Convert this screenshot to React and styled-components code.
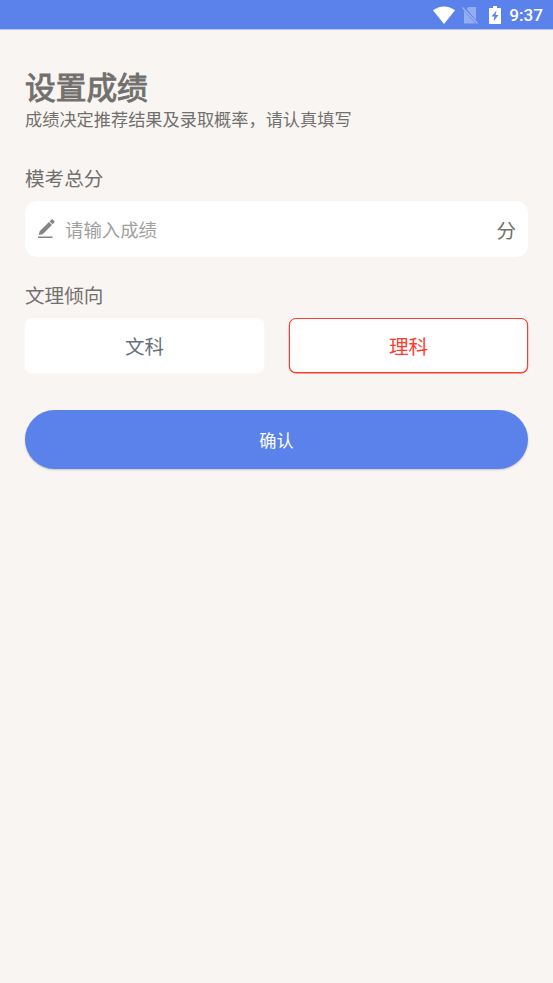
import { useState } from 'react';
import styled, { createGlobalStyle } from 'styled-components';

const GlobalStyle = createGlobalStyle`
  * {
    box-sizing: border-box;
  }

  body {
    margin: 0;
    min-height: 100vh;
    background: #f9f5f2;
    color: #72706e;
    font-family: 'Noto Sans CJK SC', sans-serif;
  }
`;

const StatusBar = styled.header`
  display: flex;
  align-items: center;
  justify-content: flex-end;
  height: 30px;
  padding-right: 10px;
  border-bottom: 1px solid #b3c3ee;
  background: #5b81ea;
  color: #fff;
`;

const StatusIcon = styled.svg`
  display: block;
  margin-right: ${({ $gap }) => $gap}px;
`;

const Clock = styled.span`
  padding-top: 1px;
  font: 500 17.2px/28px Roboto, sans-serif;
`;

const Page = styled.main`
  padding: 33px 25px 0;
`;

const Title = styled.h1`
  margin: 0;
  font-size: 30.7px;
  font-weight: 400;
  line-height: 45px;
  -webkit-text-stroke: 1px currentColor;
`;

const Subtitle = styled.p`
  margin: 0;
  font-size: 17.2px;
  line-height: 21px;
`;

const Label = styled.h2`
  margin: ${({ $top }) => $top}px 0 0;
  font-size: 19.6px;
  font-weight: 400;
  line-height: 28px;
`;

const Field = styled.label`
  display: flex;
  align-items: center;
  height: 56px;
  margin-top: 9px;
  padding: 0 12px;
  border-radius: 12px;
  background: #fff;
  font-size: 19.6px;
`;

const ScoreInput = styled.input`
  flex: 1;
  min-width: 0;
  margin-left: 8px;
  padding: 0;
  border: none;
  outline: none;
  background: transparent;
  color: #72706e;
  font-family: inherit;
  font-size: 18.4px;

  &::placeholder {
    color: #9f9f9f;
    opacity: 1;
  }
`;

const Options = styled.div`
  display: grid;
  grid-template-columns: 1fr 1fr;
  gap: 25px;
  margin-top: 9px;
`;

const Option = styled.button`
  height: 55px;
  padding: 0;
  border: 1px solid ${({ $active }) => ($active ? '#ff3b2d' : '#fff')};
  border-radius: 7px;
  background: #fff;
  box-shadow: 0 0.4px 0 0.2px ${({ $active }) => ($active ? '#ff3b2d' : '#fff')};
  color: ${({ $active }) => ($active ? '#ff3b2d' : '#66707a')};
  font-family: inherit;
  font-size: 19.6px;
  cursor: pointer;
`;

const SubmitButton = styled.button`
  display: block;
  width: 100%;
  height: 59px;
  margin-top: 37px;
  padding: 0;
  border: none;
  border-radius: 30px;
  background: #5b81ea;
  box-shadow: 0 1px 2px rgba(0, 0, 0, 0.2);
  color: #fff;
  font-family: inherit;
  font-size: 17.2px;
  cursor: pointer;
`;

function App() {
  const [score, setScore] = useState('');
  const [subject, setSubject] = useState('理科');

  return (
    <>
      <GlobalStyle />
      <StatusBar>
        <StatusIcon $gap={7} width="22" height="18" viewBox="0 0 22 18">
          <path d="M0 4.2C6.5-.9 15.5-.9 22 4.2L11 18Z" fill="#fff" />
        </StatusIcon>
        <StatusIcon $gap={11} width="16" height="18" viewBox="0 0 16 18">
          <path d="M4.5 3 6.5 1H14v13ZM2 4.5 13.5 17.500H2Z" fill="#fff" opacity=".35" />
          <path d="m.5 1.5 15 16" stroke="#fff" strokeWidth="1.4" opacity=".4" />
        </StatusIcon>
        <StatusIcon $gap={8} width="12" height="18" viewBox="0 0 12 18">
          <path d="M4 0h4v2h3.5l.5.5v15l-.5.5H.5l-.5-.5v-15L.5 2H4Z" fill="#fff" />
          <path d="M7.500 4.5 2.500 10.500H5.500L4.500 15.500 9.500 9H6.500Z" fill="#5b81ea" />
        </StatusIcon>
        <Clock>9:37</Clock>
      </StatusBar>
      <Page>
        <Title>设置成绩</Title>
        <Subtitle>成绩决定推荐结果及录取概率，请认真填写</Subtitle>
        <Label $top={35}>模考总分</Label>
        <Field>
          <svg width="20" height="20" viewBox="0 0 20 20" fill="#858585">
            <path d="M1 17.500h14.500v1.500H1Z" />
            <path d="M2.700 12.300 12 3l3 3-9.300 9.300-4 .7ZM12.600 2.400l1.600-1.600c.6-.6 1.200-.6 1.700-.1l1.300 1.300c.5.5.5 1.100-.1 1.700l-1.600 1.600Z" />
          </svg>
          <ScoreInput
            value={score}
            onChange={(e) => setScore(e.target.value)}
            placeholder="请输入成绩"
          />
          <span>分</span>
        </Field>
        <Label $top={24}>文理倾向</Label>
        <Options>
          {['文科', '理科'].map((name) => (
            <Option key={name} $active={subject === name} onClick={() => setSubject(name)}>
              {name}
            </Option>
          ))}
        </Options>
        <SubmitButton>确认</SubmitButton>
      </Page>
    </>
  );
}

export default App;
